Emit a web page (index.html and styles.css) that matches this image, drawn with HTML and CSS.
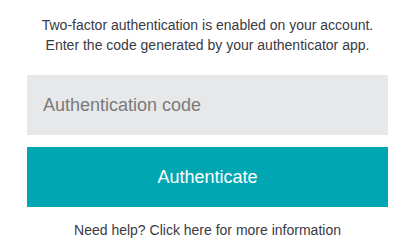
FILE: index.html
```html
<!DOCTYPE html>
<html lang="en">
<head>
  <meta charset="UTF-8">
  <title>Two-factor authentication</title>
  <link rel="stylesheet" href="styles.css">
</head>
<body>
  <main class="tfa">
    <p class="tfa-intro">Two-factor authentication is enabled on your account.<br>Enter the code generated by your authenticator app.</p>
    <form class="tfa-form">
      <input class="tfa-code" type="text" placeholder="Authentication code">
      <button class="tfa-submit" type="submit">Authenticate</button>
    </form>
    <p class="tfa-help">Need help? Click here for more information</p>
  </main>
</body>
</html>
```

FILE: styles.css
```css
html, body {
  margin: 0;
  padding: 0;
  background: #ffffff;
  font-family: "Liberation Sans", Arial, sans-serif;
}

.tfa {
  width: 361px;
  padding: 15px 0 0 27px;
  color: #3a3a44;
}

.tfa-intro {
  margin: 0;
  font-size: 14px;
  line-height: 20px;
  text-align: center;
}

.tfa-form {
  display: flex;
  flex-direction: column;
  gap: 12px;
  margin-top: 20px;
}

.tfa-code {
  box-sizing: border-box;
  height: 60px;
  border: none;
  background: #e7e8ea;
  padding: 0 16px;
  font-family: inherit;
  font-size: 18px;
  color: #333;
  outline: none;
}
.tfa-code::placeholder {
  color: #7a7a7a;
}

.tfa-submit {
  height: 60px;
  border: none;
  background: #00a7b3;
  color: #ffffff;
  font-family: inherit;
  font-size: 18px;
  cursor: pointer;
}

.tfa-help {
  margin: 13px 0 0;
  font-size: 14px;
  line-height: 20px;
  text-align: center;
}
```
